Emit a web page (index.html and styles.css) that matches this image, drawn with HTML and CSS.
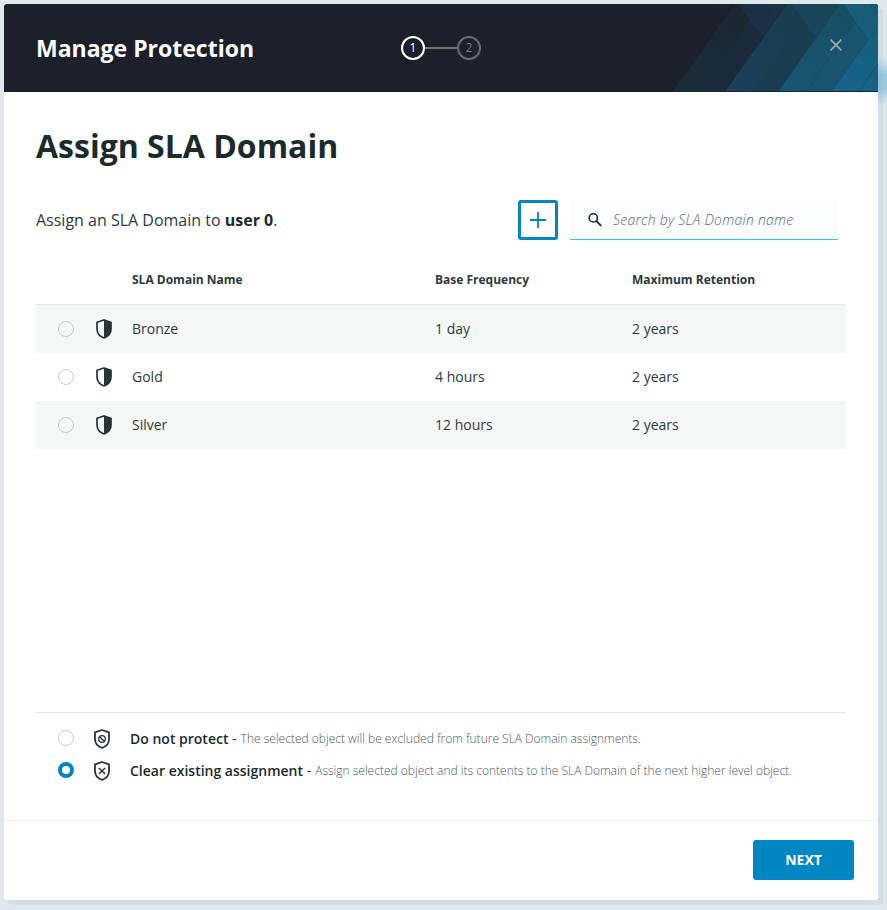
FILE: index.html
```html
<!DOCTYPE html>
<html lang="en">
<head>
<meta charset="utf-8">
<title>Manage Protection</title>
<link rel="stylesheet" href="styles.css">
</head>
<body>
<svg class="defs" width="0" height="0" aria-hidden="true">
  <symbol id="shield-half" viewBox="0 0 16 20">
    <path d="M8 1 15 3.3V10C15 14.6 12.3 17.4 8 19 3.7 17.4 1 14.6 1 10V3.3Z" fill="none" stroke="currentColor" stroke-width="1.7" stroke-linejoin="round"/>
    <path d="M8 1 15 3.3V10C15 14.6 12.3 17.4 8 19Z" fill="currentColor"/>
  </symbol>
  <symbol id="shield" viewBox="0 0 16 20">
    <path d="M8 1 15 3.3V10C15 14.6 12.3 17.4 8 19 3.7 17.4 1 14.6 1 10V3.3Z" fill="none" stroke="currentColor" stroke-width="1.8" stroke-linejoin="round"/>
  </symbol>
</svg>
<div class="modal">
  <header class="header">
    <svg class="pattern" viewBox="670 4 208 88" width="208" height="88" aria-hidden="true">
      <defs>
        <linearGradient id="g1" x1="1" y1="0" x2="0" y2="1"><stop offset="0" stop-color="#1b2630"/><stop offset="1" stop-color="#1b2c3b"/></linearGradient>
        <linearGradient id="g2" x1="1" y1="0" x2="0" y2="1"><stop offset="0" stop-color="#1a3c4b"/><stop offset="1" stop-color="#1a405b"/></linearGradient>
        <linearGradient id="g3" x1="1" y1="0" x2="0" y2="1"><stop offset="0" stop-color="#194d60"/><stop offset="1" stop-color="#175676"/></linearGradient>
        <linearGradient id="g4" x1="1" y1="0" x2="0" y2="1"><stop offset="0" stop-color="#165d7a"/><stop offset="1" stop-color="#15658f"/></linearGradient>
      </defs>
      <path d="M711 4H740L722 21Z" fill="#1b222c"/>
      <path d="M673 92 735 4H790L726 92Z" fill="url(#g1)"/>
      <path d="M700 92 748 22 762 38 726 92Z" fill="#1b2a3a"/>
      <path d="M738 4H787L762 38Z" fill="#1b3044"/>
      <path d="M764 4H787L775 20Z" fill="#1a3241"/>
      <path d="M725 92 787 4H840L778 92Z" fill="url(#g2)"/>
      <path d="M752 92 802 22 816 38 778 92Z" fill="#1a3d50"/>
      <path d="M791 4H840L816 38Z" fill="#19455a"/>
      <path d="M817 4H840L828 20Z" fill="#194657"/>
      <path d="M778 92 840 4H878V92Z" fill="url(#g3)"/>
      <path d="M806 92 854 22 868 40 832 92Z" fill="#185370"/>
      <path d="M843 4H878V27L868 40Z" fill="#175d79"/>
      <path d="M869 4H878V16Z" fill="#185a73"/>
      <path d="M832 92 878 27V92Z" fill="url(#g4)"/>
      <path d="M806 92 854 22M859 92 878 64M868 40 843 4M869 4 878 17" fill="none" stroke="#174a61" stroke-width=".6"/>
      <path d="M670 91.5H878" stroke="#17283a"/>
    </svg>
    <h2 class="header-title">Manage Protection</h2>
    <div class="steps">
      <span class="step step-active">1</span>
      <span class="step-line"></span>
      <span class="step">2</span>
    </div>
    <svg class="close" viewBox="0 0 12 12" width="12" height="12"><path d="M.6.6 11.4 11.4M11.4.6.6 11.4" stroke="#a1a9ac" stroke-width="1.7"/></svg>
  </header>
  <main class="body">
    <h1 class="title">Assign SLA Domain</h1>
    <div class="toolbar">
      <p class="lead">Assign an SLA Domain to <b>user 0</b>.</p>
      <button class="add" aria-label="Add"><svg viewBox="0 0 16 16" width="16" height="16"><path d="M8 0V16M0 8H16" stroke="#0087c3" stroke-width="1.8"/></svg></button>
      <div class="search">
        <svg viewBox="0 0 14 14" width="14" height="14"><circle cx="5.3" cy="4.9" r="4.1" fill="none" stroke="#1b2b2c" stroke-width="1.6"/><path d="M8.2 7.8 13.2 12.8" stroke="#1b2b2c" stroke-width="1.9"/></svg>
        <span>Search by SLA Domain name</span>
      </div>
    </div>
    <div class="table">
      <div class="row head"><span class="name">SLA Domain Name</span><span>Base Frequency</span><span>Maximum Retention</span></div>
      <div class="row odd"><i class="radio"></i><svg class="shield"><use href="#shield-half"/></svg><span class="name">Bronze</span><span>1 day</span><span>2 years</span></div>
      <div class="row"><i class="radio"></i><svg class="shield"><use href="#shield-half"/></svg><span class="name">Gold</span><span>4 hours</span><span>2 years</span></div>
      <div class="row odd"><i class="radio"></i><svg class="shield"><use href="#shield-half"/></svg><span class="name">Silver</span><span>12 hours</span><span>2 years</span></div>
    </div>
    <div class="options">
      <div class="option">
        <i class="radio"></i>
        <svg class="shield" viewBox="0 0 16 20"><use href="#shield"/><circle cx="8" cy="10" r="3.3" fill="none" stroke="currentColor" stroke-width="1.3"/><path d="M5.7 7.7 10.3 12.3" stroke="currentColor" stroke-width="1.3"/></svg>
        <span class="label">Do not protect <span class="dash">-</span></span><span class="hint">The selected object will be excluded from future SLA Domain assignments.</span>
      </div>
      <div class="option">
        <i class="radio checked"></i>
        <svg class="shield" viewBox="0 0 16 20"><use href="#shield"/><path d="M4.9 6.9 11.1 13.1M11.1 6.9 4.9 13.1" stroke="currentColor" stroke-width="1.4"/></svg>
        <span class="label">Clear existing assignment <span class="dash">-</span></span><span class="hint">Assign selected object and its contents to the SLA Domain of the next higher level object.</span>
      </div>
    </div>
  </main>
  <footer class="footer"><button class="next">NEXT</button></footer>
</div>
</body>
</html>
```
FILE: styles.css
```css
* { box-sizing: border-box; }
body {
  margin: 0;
  height: 910px;
  padding: 4px 9px 10px 4px;
  overflow: hidden;
  font-family: "Open Sans", sans-serif;
  color: #2b3a3b;
  background: linear-gradient(rgba(152, 201, 223, 0), #98c9df 35%, #98c9df 65%, rgba(152, 201, 223, 0)) 877px 57px / 10px 48px no-repeat, #dfe9ed;
}
h1, h2, p { margin: 0; }
button { font-family: inherit; padding: 0; }
.defs { position: absolute; }
.modal {
  width: 874px;
  height: 896px;
  display: flex;
  flex-direction: column;
  background: #fff;
  border-radius: 3px;
  box-shadow: 5px 5px 0 rgba(160, 180, 190, .2);
}
.header {
  position: relative;
  height: 88px;
  flex: none;
  display: grid;
  grid-template-columns: 365px 1fr auto;
  align-items: center;
  padding: 0 36px 0 32px;
  border-radius: 3px 3px 0 0;
  overflow: hidden;
  background: #1c202b;
  box-shadow: inset 0 -1px 0 #161d28;
}
.pattern { position: absolute; right: 0; top: 0; }
.header-title { color: #fff; font-size: 23px; line-height: 32px; font-weight: 700; }
.steps { display: flex; align-items: center; }
.step {
  width: 24px;
  height: 24px;
  border: 2px solid #686d73;
  border-radius: 50%;
  color: #747980;
  font-size: 12px;
  line-height: 20px;
  text-align: center;
}
.step-active { border-color: #fff; color: #fff; }
.step-line { width: 32px; height: 2px; background: #6f7577; }
.close { position: relative; margin-bottom: 6px; display: block; }
.body { flex: 1; display: flex; flex-direction: column; padding: 32px 32px 0; }
.title { font-size: 32px; line-height: 44px; font-weight: 700; color: #1b2b2c; }
.toolbar { display: flex; align-items: center; margin-top: 32px; padding-right: 8px; height: 40px; }
.lead { flex: 1; font-size: 16px; line-height: 24px; }
.lead b { color: #1b2b2c; }
.add {
  width: 40px;
  height: 40px;
  border: 3px solid #0087c3;
  border-radius: 3px;
  background: #fff;
  display: flex;
  align-items: center;
  justify-content: center;
}
.search {
  width: 268px;
  height: 40px;
  margin-left: 12px;
  padding: 0 18px;
  display: flex;
  align-items: center;
  gap: 11px;
  background: #fbfcfe;
  border-bottom: 1px solid #36c0ea;
  font-size: 14px;
  font-style: italic;
  font-weight: 300;
  letter-spacing: .26px;
  color: #5f6a6b;
}
.search svg { flex: none; }
.search span { white-space: nowrap; }
.table { margin-top: 16px; }
.row {
  height: 48px;
  display: grid;
  grid-template-columns: 60px 36px 303px 197px 1fr;
  align-items: center;
  font-size: 14px;
}
.row span { padding-bottom: 2px; }
.row .name { grid-column: 3; }
.head { height: 49px; font-size: 12px; font-weight: 700; border-bottom: 1px solid #e2e6e6; }
.odd { background: #f5f7f6; }
.radio {
  width: 16px;
  height: 16px;
  margin-left: 22px;
  border: 1px solid #c8cccc;
  border-radius: 50%;
  flex: none;
}
.checked { border: 4px solid #0087c3; }
.shield { width: 16px; height: 20px; color: #263536; flex: none; display: block; }
.options { margin-top: auto; height: 108px; padding-top: 10px; border-top: 1px solid #e4e6e6; }
.option { display: flex; align-items: center; height: 32px; white-space: nowrap; }
.option .radio { margin-right: 20px; margin-bottom: 2px; }
.label { margin-left: 20px; padding-bottom: 2px; font-size: 14px; font-weight: 600; color: #1b2b2c; }
.dash { font-weight: 400; }
.hint { margin-left: 4px; padding-bottom: 2px; font-size: 12px; font-weight: 300; color: #4b5859; }
.footer {
  height: 80px;
  flex: none;
  display: flex;
  justify-content: flex-end;
  padding: 19px 24px;
  border-top: 1px solid #f0f2f2;
}
.next {
  width: 101px;
  height: 40px;
  border: 0;
  border-radius: 3px;
  background: #0087c3;
  color: #fff;
  font-size: 14px;
  font-weight: 700;
  padding-bottom: 2px;
}
```
